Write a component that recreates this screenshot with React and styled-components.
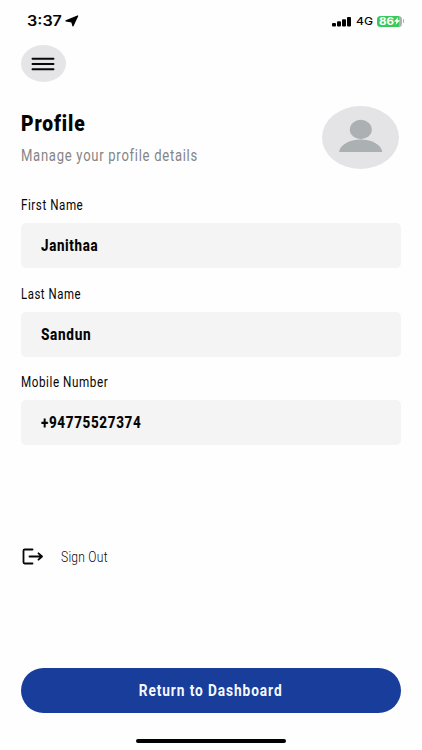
import React from "react";
import styled, { createGlobalStyle } from "styled-components";

const GlobalStyle = createGlobalStyle`
  * { box-sizing: border-box; }
  html, body { margin: 0; background: #fefefe; }
  body { font-family: Roboto, "Liberation Sans", sans-serif; color: #050505; }
`;

const Screen = styled.main`
  width: 422px;
  height: 750px;
  padding: 0 21px;
  display: flex;
  flex-direction: column;
  overflow: hidden;
  background: #fefefe;
`;

const Condensed = styled.span`
  display: block;
  white-space: nowrap;
  transform: scaleX(${(p) => p.$stretch || 0.8});
  transform-origin: ${(p) => p.$origin || "left"} center;
`;

const StatusBar = styled.header`
  height: 45px;
  margin: 0 -21px;
  padding: 0 18px 3px 27px;
  display: flex;
  align-items: center;
  justify-content: space-between;
  font-family: Inter, sans-serif;
`;

const StatusGroup = styled.div`
  display: flex;
  align-items: center;
`;

const Time = styled(Condensed)`
  width: 38px;
  font-size: 14px;
  font-weight: 600;
  line-height: 18px;
`;

const Network = styled(Condensed)`
  width: 21px;
  margin-left: 5px;
  font-size: 10.5px;
  font-weight: 500;
`;

const Battery = styled.div`
  width: 25px;
  height: 11px;
  border-radius: 3.5px;
  display: flex;
  align-items: center;
  padding-left: 2px;
  background: linear-gradient(90deg, #39c85b 86%, #a9b3ab 86%);
  color: #fff;
`;

const Charge = styled(Condensed)`
  width: 15px;
  font-size: 10.5px;
  font-weight: 700;
  line-height: 11px;
`;

const BatteryTip = styled.i`
  width: 1px;
  height: 4px;
  margin-left: 1px;
  border-radius: 0 1px 1px 0;
  background: #aaa;
`;

const MenuButton = styled.button`
  width: 45px;
  height: 37px;
  padding: 0 1px 0 0;
  border: 0;
  border-radius: 50%;
  background: #e5e5e7;
  display: flex;
  align-items: center;
  justify-content: center;
`;

const ProfileHeader = styled.section`
  height: 63px;
  margin-top: 24px;
  display: flex;
  justify-content: space-between;
  padding-right: 2px;
`;

const Title = styled(Condensed).attrs({ as: "h1" })`
  margin: 5px 0 0;
  font-size: 22px;
  line-height: 26px;
  font-weight: 900;
  letter-spacing: 1px;
`;

const Subtitle = styled(Condensed).attrs({ as: "p" })`
  margin: 9px 0 0;
  font-size: 16.5px;
  line-height: 20px;
  letter-spacing: 0.9px;
  color: #858585;
`;

const Avatar = styled.div`
  width: 77px;
  height: 63px;
  border-radius: 50%;
  background: #e4e4e6;
`;

const Form = styled.section`
  margin-top: 27px;
  display: grid;
  gap: 16.5px;
`;

const Field = styled.label`
  height: 72px;
  display: flex;
  flex-direction: column;
  justify-content: space-between;
`;

const FieldName = styled(Condensed)`
  font-size: 14.5px;
  line-height: 20px;
  letter-spacing: 0.7px;
`;

const FieldBox = styled.span`
  height: 45px;
  padding-left: 20px;
  border-radius: 5px;
  background: #f4f4f4;
  display: flex;
  align-items: center;
`;

const FieldValue = styled(Condensed)`
  font-size: 16.5px;
  font-weight: 800;
  letter-spacing: 0.8px;
`;

const SignOut = styled.button`
  height: 24px;
  margin-top: 100px;
  padding: 0 0 0 1px;
  border: 0;
  background: none;
  color: #080808;
  display: flex;
  align-items: center;
  gap: 17px;
  font-family: inherit;
`;

const SignOutText = styled(Condensed)`
  font-size: 15.5px;
  font-weight: 300;
  letter-spacing: 0.3px;
`;

const DashboardButton = styled.button`
  height: 45px;
  margin-top: 99px;
  flex: none;
  padding: 0;
  border: 0;
  border-radius: 23px;
  background: #193d9a;
  color: #f5f9ff;
  display: flex;
  align-items: center;
  justify-content: center;
  font-family: inherit;
`;

const ButtonText = styled(Condensed)`
  font-size: 16.5px;
  font-weight: 700;
  letter-spacing: 1.1px;
`;

const HomeIndicator = styled.div`
  width: 150px;
  height: 4px;
  margin: 26px auto 0;
  border-radius: 2px;
  background: #000;
`;

const fields = [
  { name: "First Name", value: "Janithaa", nameStretch: 0.8, valueStretch: 0.81 },
  { name: "Last Name", value: "Sandun", nameStretch: 0.785, valueStretch: 0.825 },
  { name: "Mobile Number", value: "+94775527374", nameStretch: 0.805, valueStretch: 0.815 },
];

export default function App() {
  return (
    <>
      <GlobalStyle />
      <Screen>
        <StatusBar>
          <StatusGroup>
            <Time $stretch={1.15}>3:37</Time>
            <svg width="14" height="12" viewBox="0 0 14 12">
              <path d="M12.6 1 8 10.8 6.8 6.8 1 5.9Z" fill="#000" stroke="#000" strokeWidth="1.3" strokeLinejoin="round" />
            </svg>
          </StatusGroup>
          <StatusGroup>
            <svg width="19" height="11" viewBox="0 0 19 11">
              <rect x="0" y="7" width="4" height="3.5" rx="1" />
              <rect x="5" y="5.2" width="4" height="5.3" rx="1" />
              <rect x="10" y="3.2" width="4" height="7.3" rx="1" />
              <rect x="15" y="1" width="4" height="9.5" rx="1" />
            </svg>
            <Network $stretch={1.15}>4G</Network>
            <Battery>
              <Charge $stretch={1.1}>86</Charge>
              <svg width="6" height="8" viewBox="0 0 6 8">
                <path d="M4.2 0 0 4.6h2.4L1.5 8 6 3.3H3.6Z" fill="#fff" />
              </svg>
            </Battery>
            <BatteryTip />
          </StatusGroup>
        </StatusBar>
        <MenuButton aria-label="Menu">
          <svg width="24" height="14" viewBox="0 0 24 14">
            <path d="M1.5 1.7h21M1.5 7h21M1.5 12.3h21" stroke="#08080c" strokeWidth="1.9" strokeLinecap="round" />
          </svg>
        </MenuButton>
        <ProfileHeader>
          <div>
            <Title $stretch={0.875}>Profile</Title>
            <Subtitle $stretch={0.792}>Manage your profile details</Subtitle>
          </div>
          <Avatar>
            <svg width="77" height="63" viewBox="0 0 77 63">
              <g fill="#abb1b3">
                <ellipse cx="38.8" cy="23.5" rx="11" ry="9.7" />
                <path d="M17 46C18 39 27 33.5 38.7 33.5S59.4 39 60.3 46Z" />
              </g>
            </svg>
          </Avatar>
        </ProfileHeader>
        <Form>
          {fields.map((field) => (
            <Field key={field.name}>
              <FieldName $stretch={field.nameStretch}>{field.name}</FieldName>
              <FieldBox>
                <FieldValue $stretch={field.valueStretch}>{field.value}</FieldValue>
              </FieldBox>
            </Field>
          ))}
        </Form>
        <SignOut>
          <svg width="22" height="18" viewBox="0 0 22 18" fill="none" stroke="#050505" strokeWidth="1.8" strokeLinecap="round" strokeLinejoin="round">
            <path d="M10.5 1.5H2.7Q1.5 1.500 1.500 2.700V14.300Q1.500 15.500 2.700 15.500H10.500M7.500 8.500H20M16.500 5.300 20 8.500 16.500 11.700" />
          </svg>
          <SignOutText $stretch={0.78}>Sign Out</SignOutText>
        </SignOut>
        <DashboardButton>
          <ButtonText $stretch={0.83} $origin="center">Return to Dashboard</ButtonText>
        </DashboardButton>
        <HomeIndicator />
      </Screen>
    </>
  );
}
